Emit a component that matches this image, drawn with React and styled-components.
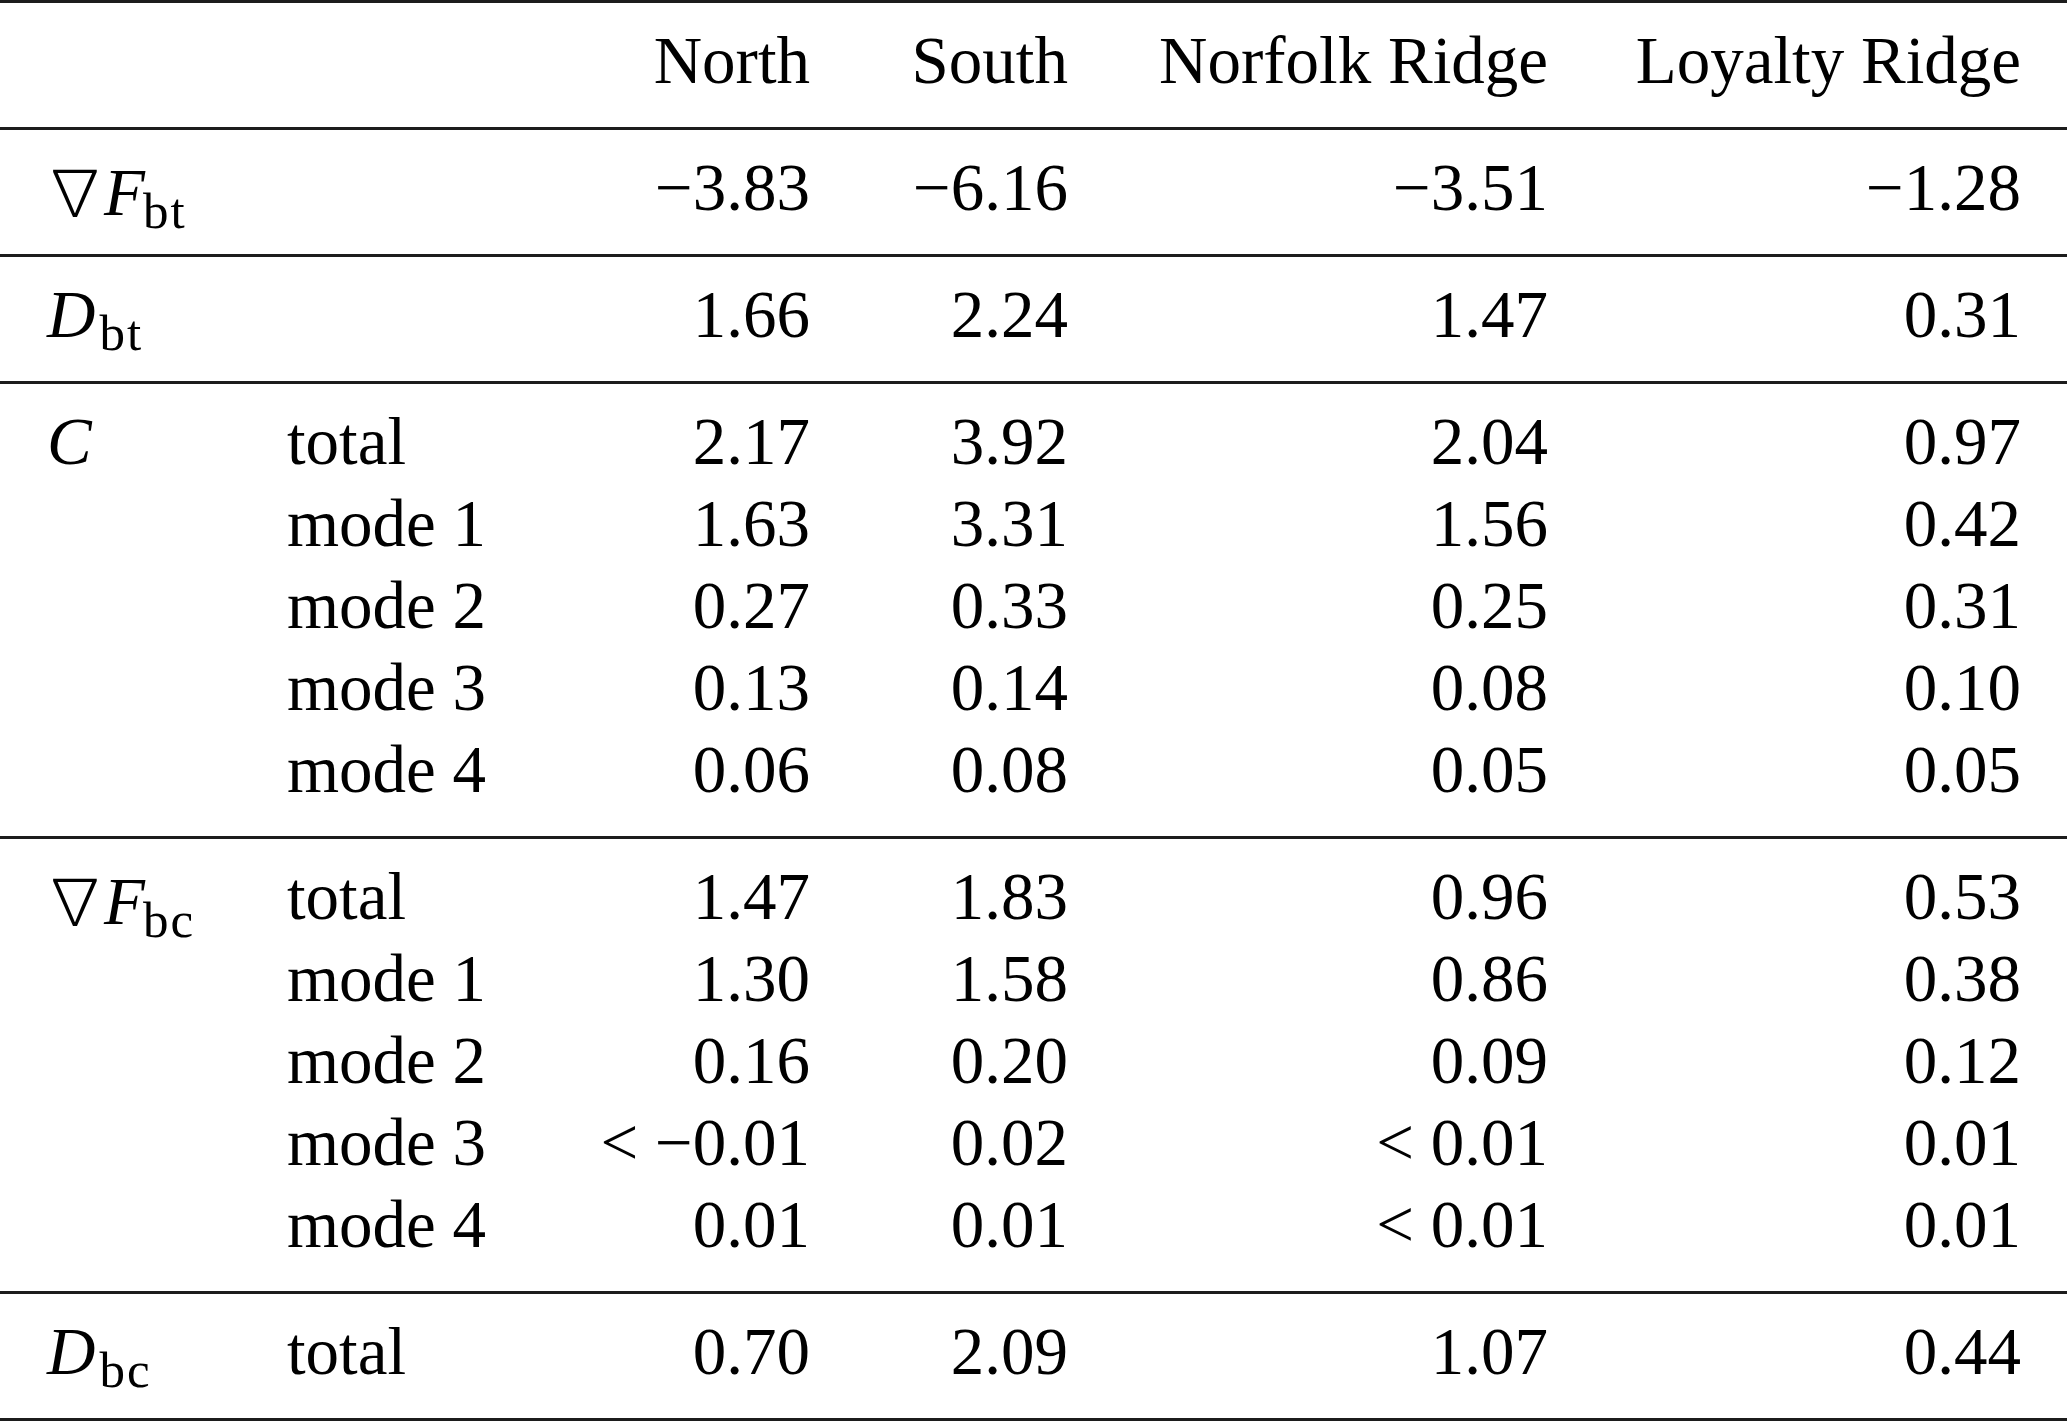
import React from 'react';
import styled, { createGlobalStyle } from 'styled-components';

const GlobalStyle = createGlobalStyle`
  html, body {
    margin: 0;
    padding: 0;
    background: #fff;
  }
  body {
    font-family: "Liberation Serif", "DejaVu Serif", serif;
    color: #000;
  }
`;

const Table = styled.div`
  width: 2067px;
  font-size: 67px;
  border-bottom: 3px solid #1c1c1c;
`;

const Section = styled.div`
  display: grid;
  grid-template-columns: 241px 288px 327px 258px 480px 473px;
  grid-auto-rows: 82px;
  line-height: 82px;
  padding: 16px 0 26px;
  border-top: 3px solid #1c1c1c;
`;

const Label = styled.div`
  white-space: nowrap;
  padding-left: ${(p) => (p.$first ? '47px' : '46px')};
`;

const Num = styled.div`
  white-space: nowrap;
  text-align: right;
  padding-right: 46px;
`;

// thin outline nabla, the serif faces only carry a heavy one
const Nabla = styled.span`
  font-family: "Noto Sans CJK JP", "DejaVu Serif", sans-serif;
  font-weight: 300;
  font-size: 64px;
  margin-left: -4px;
  margin-right: -3px;
`;

const Var = styled.i`
  font-style: italic;
`;

const Sub = styled.span`
  font-size: 51px;
  letter-spacing: 2px;
  line-height: 0;
  vertical-align: -13px;
  margin-left: ${(p) => p.$kern || 0}px;
`;

const Quantity = ({ nabla, v, sub, kern }) => (
  <>
    {nabla && <Nabla>∇</Nabla>}
    <Var>{v}</Var>
    {sub && <Sub $kern={kern}>{sub}</Sub>}
  </>
);

const sections = [
  {
    head: null,
    rows: [['', 'North', 'South', 'Norfolk Ridge', 'Loyalty Ridge']],
  },
  {
    head: <Quantity nabla v="F" sub="bt" kern={-2} />,
    rows: [['', '−3.83', '−6.16', '−3.51', '−1.28']],
  },
  {
    head: <Quantity v="D" sub="bt" kern={4} />,
    rows: [['', '1.66', '2.24', '1.47', '0.31']],
  },
  {
    head: <Quantity v="C" />,
    rows: [
      ['total', '2.17', '3.92', '2.04', '0.97'],
      ['mode 1', '1.63', '3.31', '1.56', '0.42'],
      ['mode 2', '0.27', '0.33', '0.25', '0.31'],
      ['mode 3', '0.13', '0.14', '0.08', '0.10'],
      ['mode 4', '0.06', '0.08', '0.05', '0.05'],
    ],
  },
  {
    head: <Quantity nabla v="F" sub="bc" kern={-2} />,
    rows: [
      ['total', '1.47', '1.83', '0.96', '0.53'],
      ['mode 1', '1.30', '1.58', '0.86', '0.38'],
      ['mode 2', '0.16', '0.20', '0.09', '0.12'],
      ['mode 3', '< −0.01', '0.02', '< 0.01', '0.01'],
      ['mode 4', '0.01', '0.01', '< 0.01', '0.01'],
    ],
  },
  {
    head: <Quantity v="D" sub="bc" kern={4} />,
    rows: [['total', '0.70', '2.09', '1.07', '0.44']],
  },
];

export default function App() {
  return (
    <>
      <GlobalStyle />
      <Table>
        {sections.map((sec, si) => (
          <Section key={si}>
            {sec.rows.map((row, ri) => (
              <React.Fragment key={ri}>
                <Label $first>{ri === 0 ? sec.head : null}</Label>
                <Label>{row[0]}</Label>
                {row.slice(1).map((val, ci) => (
                  <Num key={ci}>{val}</Num>
                ))}
              </React.Fragment>
            ))}
          </Section>
        ))}
      </Table>
    </>
  );
}
